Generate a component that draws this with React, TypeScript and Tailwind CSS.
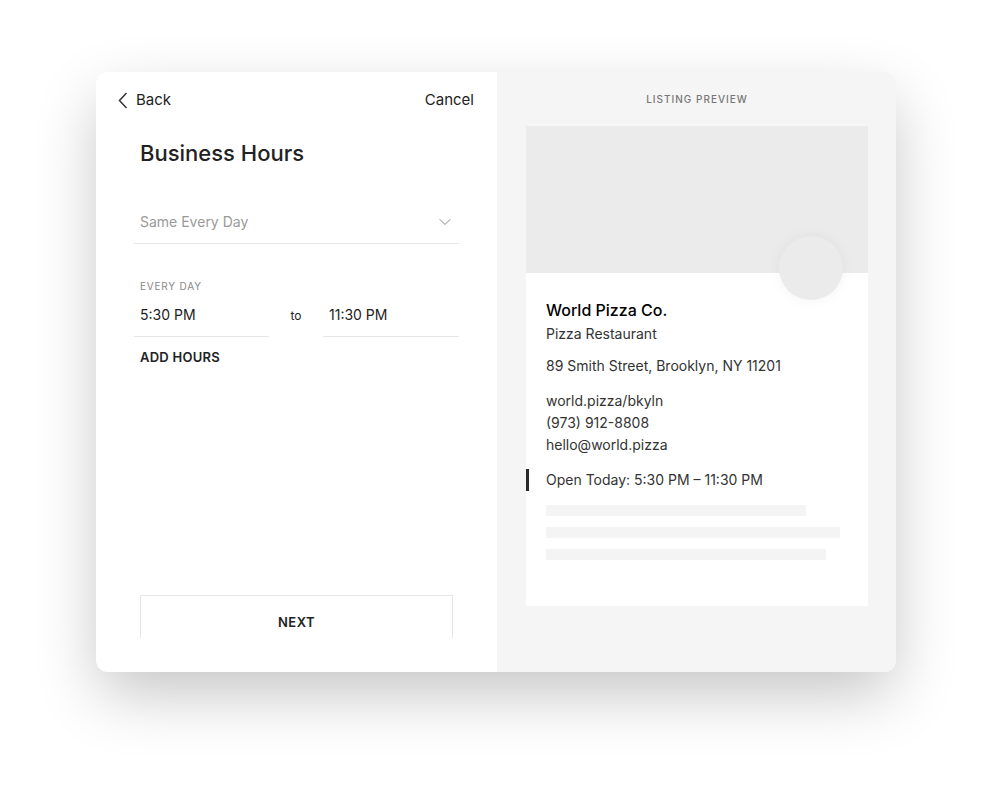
import { ChevronDown } from 'lucide-react';

const font = { fontFamily: 'Inter, "Open Sans", sans-serif' };

const TimeField = ({ value, w }: { value: string; w: string }) => (
  <div className={`flex h-[44px] items-center border-b border-[#e6e6e6] px-[6px] text-[14px] text-[#222] ${w}`}>
    {value}
  </div>
);

const SkeletonBar = ({ w }: { w: string }) => <div className={`h-[11px] bg-[#f4f4f4] ${w}`} />;

export default function App() {
  return (
    <div className="h-[792px] w-[992px] bg-white pt-[72px] pl-[96px]" style={font}>
      <div className="flex h-[600px] w-[800px] overflow-hidden rounded-xl bg-white shadow-[0_24px_64px_-4px_rgba(0,0,0,0.24)]">
        {/* left: form */}
        <div className="flex w-[401px] flex-col pt-[1px]">
          <div className="flex h-[54px] items-center justify-between px-[22px] text-[15px] text-[#222]">
            <div className="flex items-center gap-[8px]">
              <svg width="10" height="17" viewBox="0 0 10 17" fill="none" stroke="#333" strokeWidth="1.5">
                <path d="M8.5 1 L1.5 8.5 L8.5 16" />
              </svg>
              <span>Back</span>
            </div>
            <span className="mr-[1px]">Cancel</span>
          </div>

          <div className="ml-[38px] w-[325px]">
            <h1 className="mt-[11px] px-[6px] text-[22px] leading-[30px] font-medium text-[#222]">Business Hours</h1>

            <div className="mt-[32px] flex h-[44px] items-center justify-between border-b border-[#e6e6e6] px-[6px]">
              <span className="text-[14px] text-[#9a9a9a]">Same Every Day</span>
              <ChevronDown size={20} strokeWidth={1.2} className="-mr-[2px] text-[#888]" />
            </div>

            <div className="mt-[35px] px-[6px] text-[10px] leading-[14px] tracking-[0.08em] text-[#888]">EVERY DAY</div>
            <div className="flex items-center">
              <TimeField value="5:30 PM" w="w-[135px]" />
              <div className="w-[54px] pt-[1px] text-center text-[12px] text-[#222]">to</div>
              <TimeField value="11:30 PM" w="w-[136px]" />
            </div>
            <div className="mt-[10px] px-[6px] text-[13px] leading-[20px] font-semibold tracking-[0.02em] text-[#222]">
              ADD HOURS
            </div>
          </div>

          <div className="mt-auto mb-[34px] ml-[44px] h-[43px] w-[313px] overflow-hidden">
            <button className="flex h-[55px] w-full items-center justify-center border border-[#e6e6e6] text-[13px] font-semibold tracking-[0.04em] text-[#222]">
              NEXT
            </button>
          </div>
        </div>

        {/* right: preview */}
        <div className="flex flex-1 flex-col bg-[#f5f5f5] pr-[28px] pl-[29px]">
          <div className="flex h-[54px] items-center justify-center text-[10px] font-medium tracking-[0.1em] text-[#777]">
            LISTING PREVIEW
          </div>
          <div className="h-[480px] bg-white">
            <div className="relative h-[147px] bg-[#ebebeb]">
              <div className="absolute top-[110px] left-[253px] h-[64px] w-[64px] rounded-full bg-[#ebebeb] shadow-[0_0_14px_rgba(0,0,0,0.05)]" />
            </div>
            <div className="pt-[25px] text-[14px] text-[#333]">
              <div className="pl-[20px] text-[16px] leading-6 font-medium text-black">World Pizza Co.</div>
              <div className="pl-[20px] leading-6">Pizza Restaurant</div>
              <div className="mt-[8px] pl-[20px] leading-6">89 Smith Street, Brooklyn, NY 11201</div>
              <div className="mt-[12px] pl-[20px] leading-[22px]">
                <div>world.pizza/bkyln</div>
                <div>(973) 912-8808</div>
                <div>hello@world.pizza</div>
              </div>
              <div className="mt-[13px] border-l-[3px] border-[#2a2a2a] pl-[17px] leading-[22px]">
                Open Today: 5:30 PM – 11:30 PM
              </div>
              <div className="mt-[14px] flex flex-col gap-[11px] pl-[20px]">
                <SkeletonBar w="w-[260px]" />
                <SkeletonBar w="w-[294px]" />
                <SkeletonBar w="w-[280px]" />
              </div>
            </div>
          </div>
        </div>
      </div>
    </div>
  );
}
